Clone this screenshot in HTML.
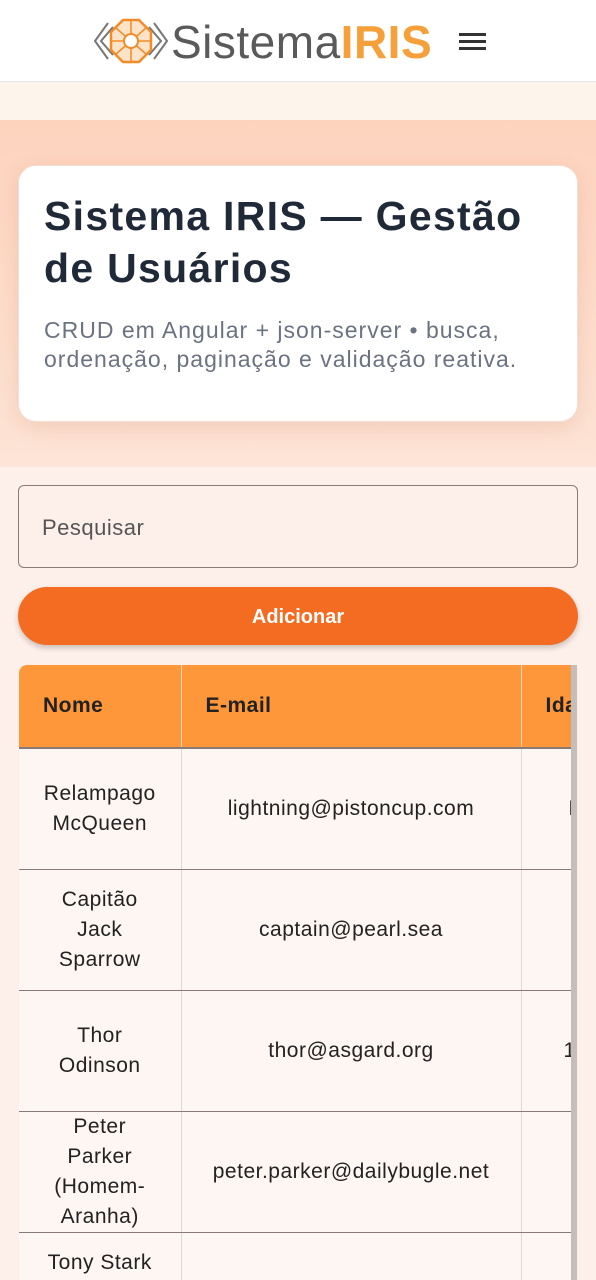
<!DOCTYPE html><html><head><meta charset="utf-8"><style>
*{margin:0;padding:0;box-sizing:border-box}
html,body{width:596px;height:1280px;overflow:hidden}
body{background:#fdefe9;font-family:"Liberation Sans",sans-serif}
.top{height:82px;background:#fff;border-bottom:1px solid #e6e6e6;position:relative}
.strip{height:38px;background:#fdf4ec}
.hero{height:347px;background:linear-gradient(180deg,#fdd3bd,#fde4d6);padding:45px 18px 0}
.card{background:#fff;border-radius:18px;height:257px;padding:24px 25px;box-shadow:0 6px 20px rgba(200,120,80,.2);border:1px solid #f3dfd5}
.card h1{font-size:41px;line-height:52px;color:#1f2937;font-weight:bold;letter-spacing:1.3px;white-space:nowrap}
.card p{margin-top:22px;font-size:23px;line-height:29px;color:#6b7280;letter-spacing:1px;white-space:nowrap}
.search{position:absolute;left:18px;top:485px;width:560px;height:83px;border:1px solid #8b7b78;border-radius:6px;font-size:22px;color:#555;padding:29px 23px;letter-spacing:.5px}
.btn{position:absolute;left:18px;top:587px;width:560px;height:58px;border-radius:29px;background:#f36c22;color:#fff;font-size:20px;font-weight:bold;text-align:center;line-height:60px;box-shadow:0 3px 6px rgba(0,0,0,.2)}
.tbl{position:absolute;left:19px;top:665px;width:552px;height:615px;overflow:hidden;border-radius:8px 0 0 0;background:#fdf6f2}
.sb{position:absolute;left:571px;top:665px;width:6px;height:615px;background:#c4bebb}
table{border-collapse:collapse;font-size:21px;color:#222;table-layout:fixed;width:640px;letter-spacing:.5px}
th{background:#fd9739;height:83px;text-align:left;padding-left:24px;font-weight:bold;border-right:1px solid #f0d5c0;border-bottom:2px solid #8a7a75}
td{height:121px;text-align:center;border-right:1px solid #e0d8d5;border-bottom:1px solid #8a7a75;line-height:30px;overflow:hidden}
</style></head><body>
<div class="top">
<svg style="position:absolute;left:94px;top:18px" width="74" height="46" viewBox="0 0 74 46">
<path d="M14 5 L1 23 L14 41 M60 5 L73 23 L60 41" stroke="#777" stroke-width="2" fill="none"/>
<path d="M19 9 L7 23 L19 37 M55 9 L67 23 L55 37" stroke="#777" stroke-width="2" fill="none"/>
<polygon points="29,2 45,2 57,14 57,32 45,44 29,44 17,32 17,14" fill="#fde3c8" stroke="#f28c28" stroke-width="2.5"/>
<path d="M22 10 L52 36 M52 10 L22 36 M37 3 L37 43 M18 23 L56 23" stroke="#f28c28" stroke-width="1.5"/>
<circle cx="37" cy="23" r="7" fill="#fff" stroke="#f28c28" stroke-width="2"/>
</svg>
<div style="position:absolute;left:171px;top:15px;font-size:46px;color:#5a5a5a;letter-spacing:.5px;white-space:nowrap">Sistema<b style="color:#f5a03a">IRIS</b></div>
<div style="position:absolute;left:459px;top:33px;width:27px;height:3px;background:#333;box-shadow:0 7px 0 #333,0 14px 0 #333"></div>
</div>
<div class="strip"></div>
<div class="hero"><div class="card"><h1>Sistema IRIS — Gestão<br>de Usuários</h1><p>CRUD em Angular + json-server • busca,<br>ordenação, paginação e validação reativa.</p></div></div>
<div class="search">Pesquisar</div>
<div class="btn">Adicionar</div>
<div class="tbl"><table>
<tr><th style="width:162px">Nome</th><th style="width:340px">E-mail</th><th style="width:138px">Idade</th></tr>
<tr><td>Relampago<br>McQueen</td><td>lightning@pistoncup.com</td><td style="text-align:left;padding-left:47px">N</td></tr>
<tr><td>Capitão<br>Jack<br>Sparrow</td><td>captain@pearl.sea</td><td style="text-align:left;padding-left:50px">3</td></tr>
<tr><td>Thor<br>Odinson</td><td>thor@asgard.org</td><td style="text-align:left;padding-left:42px">15</td></tr>
<tr><td>Peter<br>Parker<br>(Homem-<br>Aranha)</td><td>peter.parker@dailybugle.net</td><td style="text-align:left;padding-left:50px">2</td></tr>
<tr><td style="vertical-align:top;padding-top:15px">Tony Stark</td><td></td><td></td></tr>
</table></div>
<div class="sb"></div>
</body></html>
